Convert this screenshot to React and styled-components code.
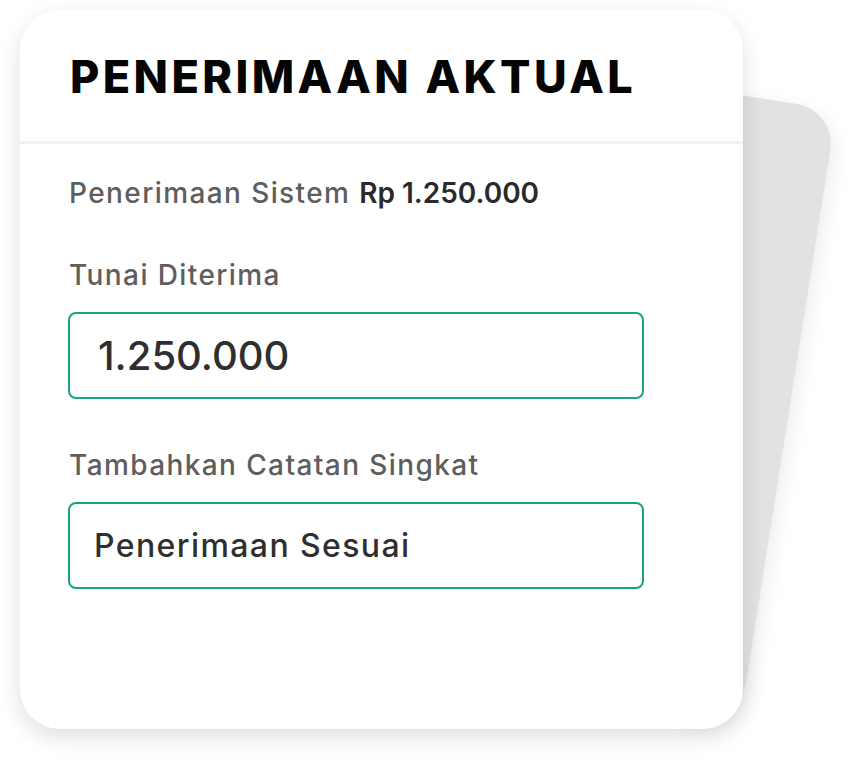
import styled, { createGlobalStyle } from "styled-components";

const GlobalStyle = createGlobalStyle`
  html, body {
    margin: 0;
    padding: 0;
    background: #ffffff;
  }
  body {
    font-family: Inter, "Noto Sans", sans-serif;
  }
`;

const Stage = styled.div`
  position: relative;
  width: 850px;
  height: 770px;
  overflow: hidden;
  padding: 10px 0 0 20px;
  box-sizing: border-box;
`;

const BackCard = styled.div`
  position: absolute;
  left: 172px;
  top: 58px;
  width: 620px;
  height: 620px;
  border-radius: 40px;
  background: #e2e2e2;
  transform: rotate(9deg);
  box-shadow: 4px 6px 20px rgba(0, 0, 0, 0.08);
`;

const Card = styled.div`
  position: relative;
  z-index: 1;
  width: 723px;
  height: 719px;
  border-radius: 40px;
  background: #ffffff;
  box-shadow: 0 8px 22px rgba(0, 0, 0, 0.13);
  display: flex;
  flex-direction: column;
`;

const Header = styled.div`
  height: 131px;
  padding: 0 0 0 50px;
  display: flex;
  align-items: center;
  border-bottom: 3px solid #f0f2f5;
  box-sizing: content-box;
`;

const Title = styled.h1`
  margin: 2px 0 0;
  font-size: 45px;
  font-weight: 800;
  line-height: 1;
  color: #050505;
  letter-spacing: 3.4px;
`;

const Body = styled.div`
  padding: 32px 100px 0 48px;
  display: flex;
  flex-direction: column;
`;

const SystemLine = styled.p`
  margin: 0 0 48px 1px;
  font-size: 28px;
  font-weight: 500;
  color: #5e5e5e;
  line-height: 34px;
  letter-spacing: 1.4px;
`;

const Amount = styled.span`
  font-weight: 600;
  color: #2a2a2a;
  letter-spacing: 0;
`;

const Field = styled.div`
  display: flex;
  flex-direction: column;
  gap: 20px;
  margin-bottom: 49px;
`;

const Label = styled.label`
  margin-left: 1px;
  font-size: 28px;
  font-weight: 500;
  color: #5e5e5e;
  line-height: 34px;
  letter-spacing: 1.4px;
`;

const Input = styled.input`
  width: 576px;
  height: 87px;
  box-sizing: border-box;
  border: 2px solid #19a384;
  border-radius: 8px;
  padding: 0 0 0 ${(p) => (p.$big ? 28 : 24)}px;
  font-family: inherit;
  font-size: ${(p) => (p.$big ? 40 : 32)}px;
  font-weight: 500;
  letter-spacing: ${(p) => (p.$big ? 0 : 1.4)}px;
  color: #2f2f2f;
  background: #ffffff;
  outline: none;
`;

export default function App() {
  return (
    <>
      <GlobalStyle />
      <Stage>
        <BackCard />
        <Card>
          <Header>
            <Title>PENERIMAAN AKTUAL</Title>
          </Header>
          <Body>
            <SystemLine>
              Penerimaan Sistem <Amount>Rp 1.250.000</Amount>
            </SystemLine>
            <Field>
              <Label htmlFor="tunai">Tunai Diterima</Label>
              <Input id="tunai" $big readOnly value="1.250.000" />
            </Field>
            <Field>
              <Label htmlFor="catatan">Tambahkan Catatan Singkat</Label>
              <Input id="catatan" readOnly value="Penerimaan Sesuai" />
            </Field>
          </Body>
        </Card>
      </Stage>
    </>
  );
}
